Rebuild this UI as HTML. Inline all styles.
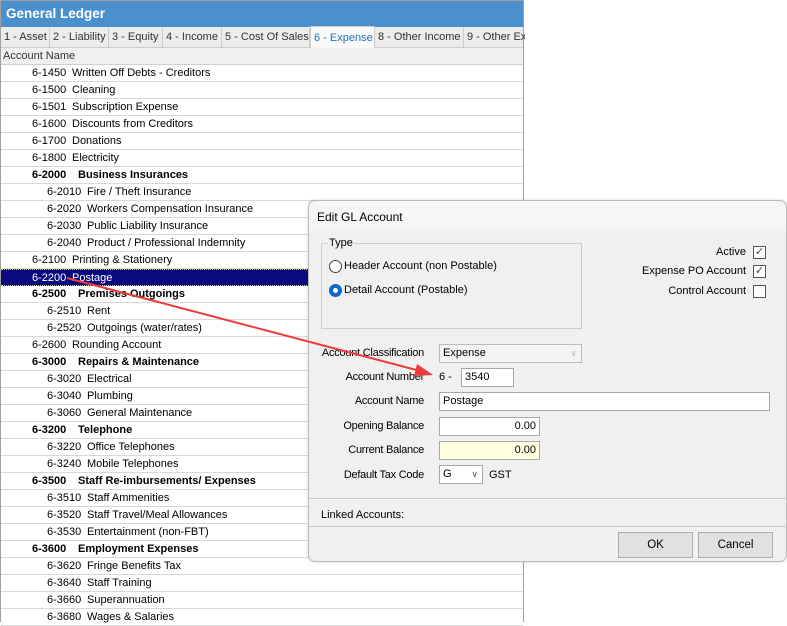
<!DOCTYPE html>
<html><head><meta charset="utf-8"><style>
*{box-sizing:border-box;margin:0;padding:0}
body{width:787px;height:622px;overflow:hidden;background:#fff;font-family:"Liberation Sans",sans-serif;font-size:11px;color:#000;position:relative}
#gl{position:absolute;left:0;top:0;width:524px;height:622px;border:1px solid #a0a0a0;border-bottom:none;background:#fff}
#title{height:26px;background:#4a8fce;color:#fff;font-weight:bold;font-size:13.5px;line-height:25px;padding-left:5px}
#tabs{position:absolute;top:26px;left:0;right:0;height:21px;background:#ececec;border-bottom:1px solid #ccc}
.tab{position:absolute;top:1px;height:20px;line-height:19px;padding-left:3px;border-right:1px solid #ccc;color:#333;white-space:nowrap;overflow:hidden}
.tab.sel{background:#fafafa;color:#1e6fc0;top:-1px;height:22px;border:1px solid #ccc;border-bottom:none;line-height:22px}
#hdr{position:absolute;top:47px;left:0;right:0;height:17px;background:#f0f0f0;color:#333;line-height:17px;padding-left:2px;border-bottom:1px solid #d0d0d0}
#rows{position:absolute;top:64px;left:0;right:0}
.r{height:17px;line-height:16px;border-bottom:1px solid #d8d8d8;padding-left:31px;white-space:nowrap}
.r.i{padding-left:46px}
.r.b{font-weight:bold}
.r.s{background:#0a0a80;color:#fff;border-top:1px dotted #cc9;border-bottom:1px dotted #cc9}
.n{display:inline-block;width:40px}
.b .n{width:46px}
#dlg{position:absolute;left:308px;top:200px;width:479px;height:362px;background:#f0f0f0;border:1px solid #bbb;border-radius:7px;box-shadow:0 0 3px rgba(0,0,0,.15)}
.a{position:absolute;white-space:nowrap}
.box{position:absolute;background:#fff;border:1px solid #a9a9a9;line-height:16px;padding-left:3px}
.cb{position:absolute;width:13px;height:13px;border:1px solid #555;background:#fff;font-size:11px;line-height:11px;text-align:center;color:#444}
.lbl{position:absolute;right:362px;text-align:right;white-space:nowrap;letter-spacing:-0.25px}
.btn{position:absolute;top:331px;width:75px;height:26px;border:1px solid #adadad;background:#e1e1e1;text-align:center;line-height:24px;font-size:11.5px}
</style></head><body>
<div id="gl">
<div id="title">General Ledger</div>
<div id="tabs">
<div class="tab" style="left:0;width:49px">1 - Asset</div>
<div class="tab" style="left:49px;width:59px">2 - Liability</div>
<div class="tab" style="left:108px;width:54px">3 - Equity</div>
<div class="tab" style="left:162px;width:59px">4 - Income</div>
<div class="tab" style="left:221px;width:88px">5 - Cost Of Sales</div>
<div class="tab sel" style="left:309px;width:65px">6 - Expense</div>
<div class="tab" style="left:374px;width:89px">8 - Other Income</div>
<div class="tab" style="left:463px;width:61px;border-right:none">9 - Other Expense</div>
</div>
<div id="hdr">Account Name</div>
<div id="rows">
<div class="r"><span class="n">6-1450</span>Written Off Debts - Creditors</div>
<div class="r"><span class="n">6-1500</span>Cleaning</div>
<div class="r"><span class="n">6-1501</span>Subscription Expense</div>
<div class="r"><span class="n">6-1600</span>Discounts from Creditors</div>
<div class="r"><span class="n">6-1700</span>Donations</div>
<div class="r"><span class="n">6-1800</span>Electricity</div>
<div class="r b"><span class="n">6-2000</span>Business Insurances</div>
<div class="r i"><span class="n">6-2010</span>Fire / Theft Insurance</div>
<div class="r i"><span class="n">6-2020</span>Workers Compensation Insurance</div>
<div class="r i"><span class="n">6-2030</span>Public Liability Insurance</div>
<div class="r i"><span class="n">6-2040</span>Product / Professional Indemnity</div>
<div class="r"><span class="n">6-2100</span>Printing &amp; Stationery</div>
<div class="r s"><span class="n">6-2200</span>Postage</div>
<div class="r b"><span class="n">6-2500</span>Premises Outgoings</div>
<div class="r i"><span class="n">6-2510</span>Rent</div>
<div class="r i"><span class="n">6-2520</span>Outgoings (water/rates)</div>
<div class="r"><span class="n">6-2600</span>Rounding Account</div>
<div class="r b"><span class="n">6-3000</span>Repairs &amp; Maintenance</div>
<div class="r i"><span class="n">6-3020</span>Electrical</div>
<div class="r i"><span class="n">6-3040</span>Plumbing</div>
<div class="r i"><span class="n">6-3060</span>General Maintenance</div>
<div class="r b"><span class="n">6-3200</span>Telephone</div>
<div class="r i"><span class="n">6-3220</span>Office Telephones</div>
<div class="r i"><span class="n">6-3240</span>Mobile Telephones</div>
<div class="r b"><span class="n">6-3500</span>Staff Re-imbursements/ Expenses</div>
<div class="r i"><span class="n">6-3510</span>Staff Ammenities</div>
<div class="r i"><span class="n">6-3520</span>Staff Travel/Meal Allowances</div>
<div class="r i"><span class="n">6-3530</span>Entertainment (non-FBT)</div>
<div class="r b"><span class="n">6-3600</span>Employment Expenses</div>
<div class="r i"><span class="n">6-3620</span>Fringe Benefits Tax</div>
<div class="r i"><span class="n">6-3640</span>Staff Training</div>
<div class="r i"><span class="n">6-3660</span>Superannuation</div>
<div class="r i"><span class="n">6-3680</span>Wages &amp; Salaries</div>
</div>
</div>

<div id="dlg">
<div class="a" style="left:0;top:0;width:477px;height:30px;background:#f6f6f6;border-radius:7px 7px 0 0"></div>
<div class="a" style="left:8px;top:9px;font-size:12px">Edit GL Account</div>
<div class="a" style="left:12px;top:42px;width:261px;height:86px;border:1px solid #ccc"></div>
<div class="a" style="left:19px;top:36px;background:#f0f0f0;padding:0 1px">Type</div>
<div class="a" style="left:20px;top:59px;width:13px;height:13px;border:1px solid #444;border-radius:50%;background:#fff"></div>
<div class="a" style="left:35px;top:59px">Header Account (non Postable)</div>
<div class="a" style="left:20px;top:83px;width:13px;height:13px;border-radius:50%;background:#1067c4"><div style="position:absolute;left:4px;top:4px;width:5px;height:5px;border-radius:50%;background:#fff"></div></div>
<div class="a" style="left:35px;top:83px">Detail Account (Postable)</div>
<div class="a" style="right:40px;top:45px">Active</div>
<div class="cb" style="left:444px;top:45px">✓</div>
<div class="a" style="right:40px;top:64px">Expense PO Account</div>
<div class="cb" style="left:444px;top:64px">✓</div>
<div class="a" style="right:40px;top:84px">Control Account</div>
<div class="cb" style="left:444px;top:84px"></div>

<div class="lbl" style="top:146px">Account Classification</div>
<div class="box" style="left:130px;top:143px;width:143px;height:19px;background:#f4f4f4;border-color:#bbb">Expense<span style="position:absolute;right:4px;top:0;color:#bbb;font-size:9px">&#8744;</span></div>
<div class="lbl" style="top:170px">Account Number</div>
<div class="a" style="left:130px;top:170px">6 -</div>
<div class="box" style="left:152px;top:167px;width:53px;height:19px">3540</div>
<div class="lbl" style="top:194px">Account Name</div>
<div class="box" style="left:130px;top:191px;width:331px;height:19px">Postage</div>
<div class="lbl" style="top:219px">Opening Balance</div>
<div class="box" style="left:130px;top:216px;width:101px;height:19px;text-align:right;padding-right:3px">0.00</div>
<div class="lbl" style="top:243px">Current Balance</div>
<div class="box" style="left:130px;top:240px;width:101px;height:19px;text-align:right;padding-right:3px;background:#ffffe0">0.00</div>
<div class="lbl" style="top:268px">Default Tax Code</div>
<div class="box" style="left:130px;top:264px;width:44px;height:19px">G<span style="position:absolute;right:4px;top:0;color:#555;font-size:9px">&#8744;</span></div>
<div class="a" style="left:180px;top:268px">GST</div>
<div class="a" style="left:0;top:297px;width:477px;border-top:1px solid #c8c8c8"></div>
<div class="a" style="left:12px;top:308px">Linked Accounts:</div>
<div class="a" style="left:0;top:325px;width:477px;border-top:1px solid #c8c8c8"></div>
<div class="btn" style="left:309px">OK</div>
<div class="btn" style="left:389px">Cancel</div>
</div>

<svg style="position:absolute;left:0;top:0" width="787" height="622">
<line x1="67" y1="278" x2="424" y2="372" stroke="#ee3a3a" stroke-width="2"/>
<polygon points="433,375 417,364 414,376" fill="#ee3a3a"/>
</svg>
</body></html>
